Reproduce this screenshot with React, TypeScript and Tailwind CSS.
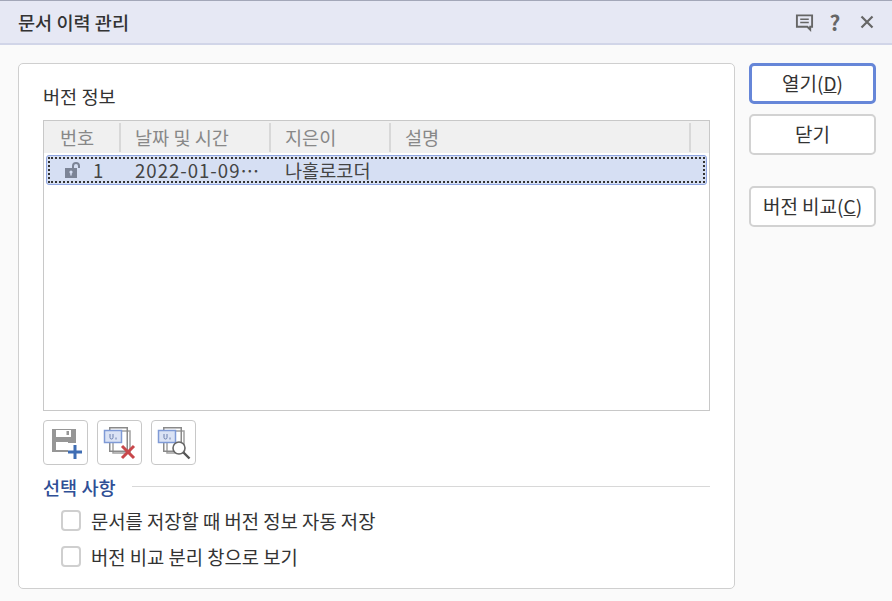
const font = { fontFamily: '"Noto Sans CJK KR", "Noto Sans", sans-serif' };

function SaveAddIcon() {
  return (
    <svg width="34" height="34" viewBox="0 0 34 34">
      <path d="M3 3h24v14h-8v9H3z" fill="#969696" />
      <rect x="7" y="4" width="15" height="7" fill="#fff" />
      <rect x="17.5" y="5" width="2.5" height="4" fill="#969696" />
      <rect x="7" y="16" width="12" height="8" fill="#fff" />
      <path d="M26 19v14M19 26h14" stroke="#3f6db3" strokeWidth="3" />
    </svg>
  );
}

function VersionDocs({ children }: { children?: React.ReactNode }) {
  return (
    <svg width="34" height="34" viewBox="0 0 34 34">
      <rect x="6.75" y="1.75" width="17.5" height="23.5" fill="#fff" stroke="#8a8a8a" strokeWidth="1.5" />
      <rect x="10" y="5" width="17" height="22" fill="none" stroke="#8a8a8a" strokeWidth="1.5" opacity="0.8" />
      <rect x="1.5" y="4.5" width="17" height="12" fill="#dbe3f5" stroke="#7f9ad6" strokeWidth="1.5" />
      <path d="M7 8v3.5q0 1.5 1.5 1.5T10 11.5V8M13 11.5v2" stroke="#6a7fae" strokeWidth="1" fill="none" />
      {children}
    </svg>
  );
}

function Divider() {
  return <div className="w-[2px] h-[29px] bg-[#d8d8d8]" />;
}

function ToolButton({ children }: { children: React.ReactNode }) {
  return (
    <button className="w-[45px] h-[45px] flex items-center justify-center bg-white border border-[#c8c8c8] rounded-[4px]">
      {children}
    </button>
  );
}

function SideButton({ children, active }: { children: React.ReactNode; active?: boolean }) {
  return (
    <button
      className={`w-[127px] h-[41px] flex items-center justify-center bg-white rounded-[5px] text-[19px] text-[#333] ${
        active ? 'border-[3px] border-[#6686d8]' : 'border-2 border-[#d2d2d2]'
      }`}
    >
      {children}
    </button>
  );
}

function Check({ label }: { label: string }) {
  return (
    <div className="flex items-center h-[36px] pl-[18px]">
      <span className="w-[20px] h-[21px] bg-white border-2 border-[#cfcfcf] rounded-[4px]" />
      <span className="ml-[10px] text-[#333] text-[18.8px]">{label}</span>
    </div>
  );
}

export default function App() {
  return (
    <div className="w-[892px] h-[601px] bg-[#fafafa] overflow-hidden" style={font}>
      <div className="h-[45px] flex items-center justify-between bg-[#e6e8f4] border-t border-t-[#a3a7b8] border-b-2 border-b-[#d1d5e8] pl-[18px] pr-[18px]">
        <span className="text-[18.6px] font-medium text-[#333]">문서 이력 관리</span>
        <div className="flex items-center">
          <svg width="19" height="20" viewBox="0 0 20 20" fill="none" stroke="#666" strokeWidth="2">
            <path d="M2 3h16v12h-2v3l-3-3H2z" />
            <path d="M5.5 7h9M5.5 10.5h9" strokeWidth="1.6" />
          </svg>
          <span className="ml-[14px] w-[14px] text-center text-[21px] leading-none font-bold text-[#666]">?</span>
          <svg className="ml-[18px]" width="14" height="14" viewBox="0 0 14 14" stroke="#666" strokeWidth="2.2">
            <path d="M1.5 1.5l11 11M12.5 1.5l-11 11" />
          </svg>
        </div>
      </div>

      <div className="flex pl-[18px] pt-[18px]">
        <div className="w-[717px] h-[526px] bg-white border border-[#cfcfcf] rounded-[5px] pt-[18px] px-[24px]">
          <div className="h-[28px] flex items-center text-[#333] text-[18.6px]">버전 정보</div>
          <div className="mt-[10px] w-[667px] h-[291px] border border-[#c8c8c8]">
            <div className="h-[32px] flex items-center bg-[#f0f0f0] text-[#888] text-[18.6px]">
              <span className="w-[75px] pl-[16px]">번호</span>
              <Divider />
              <span className="w-[148px] pl-[14px]">날짜 및 시간</span>
              <Divider />
              <span className="w-[118px] pl-[14px]">지은이</span>
              <Divider />
              <span className="w-[298px] pl-[14px]">설명</span>
              <Divider />
            </div>
            <div className="mx-[2px] mt-[2px] h-[30px] bg-[#d6dff3] border border-[#8ea4e0] rounded-[3px] p-[1px]">
              <div className="h-full flex items-center border-2 border-dotted border-[#333] text-[#444] text-[18.6px]">
                <svg className="ml-[14px]" width="18" height="18" viewBox="0 0 18 18">
                  <path d="M9 8V5q0-3 3-3t3 3v2" fill="none" stroke="#7c8496" strokeWidth="2" />
                  <rect x="1" y="7" width="12" height="10" fill="#7c8496" />
                  <circle cx="7" cy="11" r="1.6" fill="#d6dff3" />
                  <rect x="6.3" y="11" width="1.4" height="3.5" fill="#d6dff3" />
                </svg>
                <span className="ml-[11px] w-[42px]">1</span>
                <span className="w-[150px] tracking-[1px]">2022-01-09…</span>
                <span>나홀로코더</span>
              </div>
            </div>
          </div>
          <div className="mt-[9px] flex gap-[9px]">
            <ToolButton><SaveAddIcon /></ToolButton>
            <ToolButton>
              <VersionDocs>
                <path d="M19 20l12 12M31 20L19 32" stroke="#c8474a" strokeWidth="3" />
              </VersionDocs>
            </ToolButton>
            <ToolButton>
              <VersionDocs>
                <circle cx="22" cy="22" r="6" fill="#fff" stroke="#666" strokeWidth="1.6" />
                <path d="M26.5 26.5l6 6" stroke="#555" strokeWidth="2.4" />
              </VersionDocs>
            </ToolButton>
          </div>
          <div className="mt-[8px] flex items-center">
            <span className="text-[#2f4f96] text-[18.6px] font-medium">선택 사항</span>
            <div className="ml-[16px] flex-1 h-px bg-[#d8d8d8]" />
          </div>
          <div className="mt-[2px]">
            <Check label="문서를 저장할 때 버전 정보 자동 저장" />
            <Check label="버전 비교 분리 창으로 보기" />
          </div>
        </div>

        <div className="ml-[14px] flex flex-col">
          <SideButton active>
            열기(<span className="underline">D</span>)
          </SideButton>
          <div className="mt-[10px]"><SideButton>닫기</SideButton></div>
          <div className="mt-[31px]">
            <SideButton>
              버전 비교(<span className="underline">C</span>)
            </SideButton>
          </div>
        </div>
      </div>
    </div>
  );
}
